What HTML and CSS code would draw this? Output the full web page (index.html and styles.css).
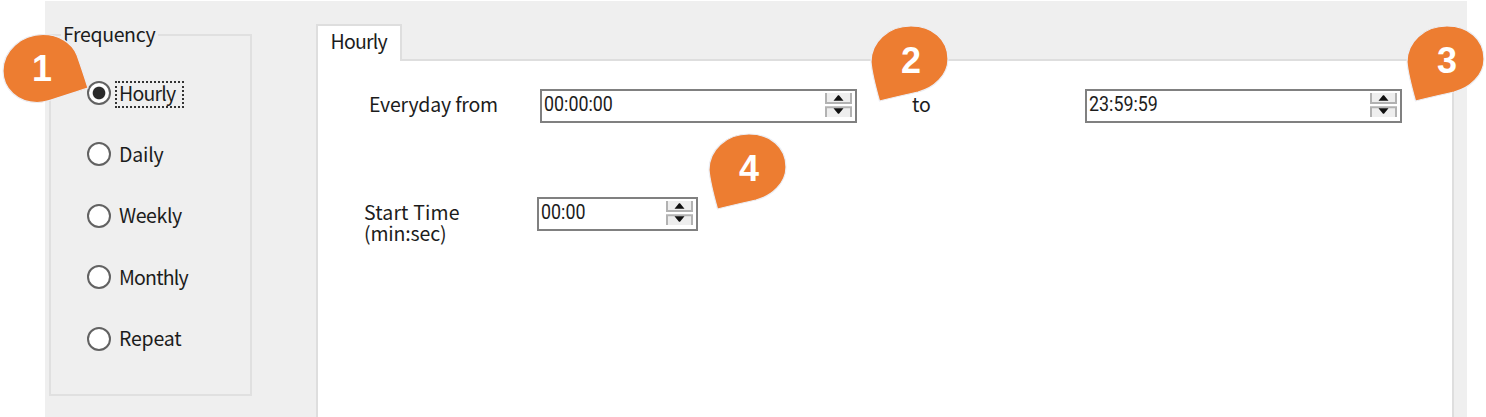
FILE: index.html
```
<!DOCTYPE html>
<html lang="en">
<head>
<meta charset="utf-8">
<title>Frequency</title>
<link rel="stylesheet" href="styles.css">
</head>
<body>
<svg class="defs" width="0" height="0" aria-hidden="true">
  <defs>
    <g id="spin">
      <path d="M0 0H27V11H0ZM0 14H27V24H0Z" fill="#eee"/>
      <path d="M1 0V10H26V0M1 24V14.3H26V24" fill="none" stroke="#b2b2b2" stroke-width="2"/>
      <path d="M8.5 7.8L13 2.3H14L18.5 7.8ZM8.5 15.2H18.5L14 20.7H13Z" fill="#111"/>
    </g>
    <path id="drop" d="M11.5 79Q4 52 3 40C3 20 20 4 43 4C64 4 80 17 80 37C80 53 66 66 50 70Q36 73 11.5 79Z"/>
  </defs>
</svg>
<main class="window">
  <section class="group">
    <h2 class="legend"><span class="t frequency">Frequency</span></h2>
    <div class="option"><i class="radio on"></i><span class="t hourly focus">Hourly</span></div>
    <div class="option"><i class="radio"></i><span class="t daily">Daily</span></div>
    <div class="option"><i class="radio"></i><span class="t weekly">Weekly</span></div>
    <div class="option"><i class="radio"></i><span class="t monthly">Monthly</span></div>
    <div class="option"><i class="radio"></i><span class="t repeat">Repeat</span></div>
  </section>
  <section class="tabs">
    <div class="tab"><span class="t hourly">Hourly</span></div>
    <div class="panel">
      <div class="row">
        <span class="label from"><span class="t everyday">Everyday from</span></span>
        <div class="field"><span class="digits">00:00:00</span><svg class="spin" width="27" height="24"><use href="#spin"/></svg></div>
        <span class="label to"><span class="t">to</span></span>
        <div class="field"><span class="digits">23:59:59</span><svg class="spin" width="27" height="24"><use href="#spin"/></svg></div>
      </div>
      <div class="row start">
        <div class="label stack"><span class="t starttime">Start Time</span><span class="t minsec">(min:sec)</span></div>
        <div class="field short"><span class="digits">00:00</span><svg class="spin" width="27" height="24"><use href="#spin"/></svg></div>
      </div>
    </div>
  </section>
</main>
<svg class="pin pin1" width="92" height="76"><path d="M88 58Q82 39 77 25C72 12 58 4.5 43 4.5C21 4.5 3 21 3 41C3 59 18 72.5 37 72.5C45 72.5 51 70 88 58Z"/><text x="42" y="51">1</text></svg>
<svg class="pin pin2" width="84" height="82"><use href="#drop"/><text x="43" y="51">2</text></svg>
<svg class="pin pin3" width="84" height="82"><use href="#drop"/><text x="43" y="51">3</text></svg>
<svg class="pin pin4" width="84" height="82"><use href="#drop"/><text x="43" y="51">4</text></svg>
</body>
</html>
```
FILE: styles.css
```
* { box-sizing: border-box; }
body {
  margin: 0;
  height: 417px;
  overflow: hidden;
  background: #fff;
  color: #1c1c1c;
  font: 19.5px/22px "Noto Sans CJK JP", "Noto Sans", sans-serif;
}
.defs { position: absolute; }
.window {
  display: flex;
  align-items: flex-start;
  width: 1422px;
  height: 416px;
  margin: 1px 0 0 45px;
  padding: 23px 13px 0 4px;
  background: #efefef;
  overflow: hidden;
}
.t { white-space: nowrap; }
.frequency { letter-spacing: -.35px; }
.hourly { letter-spacing: -.8px; }
.daily { letter-spacing: -.2px; }
.weekly { letter-spacing: -.4px; }
.monthly { letter-spacing: -.8px; }
.repeat { letter-spacing: -.2px; }
.everyday { letter-spacing: -.2px; }
.starttime { letter-spacing: .15px; }
.minsec { letter-spacing: -.15px; }
.group {
  width: 204px;
  height: 362px;
  margin: 10px 64px 0 0;
  padding: 0 0 0 36px;
  border: 2px solid #e0e0e0;
}
.legend {
  width: 97px;
  height: 22px;
  margin: -13px 0 34.5px -26px;
  padding-left: 2px;
  background: #efefef;
  font-size: inherit;
  font-weight: normal;
}
.option {
  display: flex;
  align-items: center;
  height: 27px;
  margin-bottom: 34.4px;
}
.option .t { margin-top: -1px; }
.radio {
  width: 24px;
  height: 24px;
  margin-right: 8px;
  border: 2px solid #626262;
  border-radius: 50%;
  background: #fff;
}
.radio.on { background: radial-gradient(circle, #2b2b2b 0 5.8px, #fff 6.8px); }
.focus { position: relative; }
.focus::after {
  content: "";
  position: absolute;
  inset: -1px -9px -4px -4px;
  border: 2px dotted #333;
}
.tabs { width: 1138px; flex: none; }
.tab {
  position: relative;
  z-index: 1;
  width: 86px;
  height: 37px;
  margin-bottom: -2px;
  padding: 4px 0 0 12.5px;
  border: 2px solid #dedede;
  border-bottom: 0;
  background: #fff;
}
.panel {
  height: 380px;
  padding: 28px 0 0 51px;
  border: 2px solid #dedede;
  background: #fff;
}
.row { display: flex; align-items: flex-start; }
.label { padding-top: 4px; }
.from { width: 171px; }
.to { width: 228px; padding-left: 55px; }
.start { margin: 74px 0 0 -5px; }
.stack { display: flex; flex-direction: column; width: 173px; line-height: 21px; }
.field {
  display: flex;
  justify-content: space-between;
  width: 317px;
  height: 34px;
  padding: 2px 3px 0 2px;
  border: 2px solid #808080;
  background: #fff;
}
.field.short { width: 161px; }
.digits {
  font-family: Roboto, sans-serif;
  font-size: 21px;
  transform: scaleX(.85);
  transform-origin: left;
}
.pin {
  position: absolute;
  fill: #ed7d31;
  stroke: #eceef4;
  stroke-width: 1.2px;
}
.pin text {
  fill: #fff;
  stroke: none;
  font: bold 36px "Liberation Sans", sans-serif;
  text-anchor: middle;
}
.pin1 { left: 0; top: 30px; }
.pin2 { left: 868px; top: 22px; }
.pin3 { left: 1404px; top: 22px; }
.pin4 { left: 706px; top: 130px; }
```
